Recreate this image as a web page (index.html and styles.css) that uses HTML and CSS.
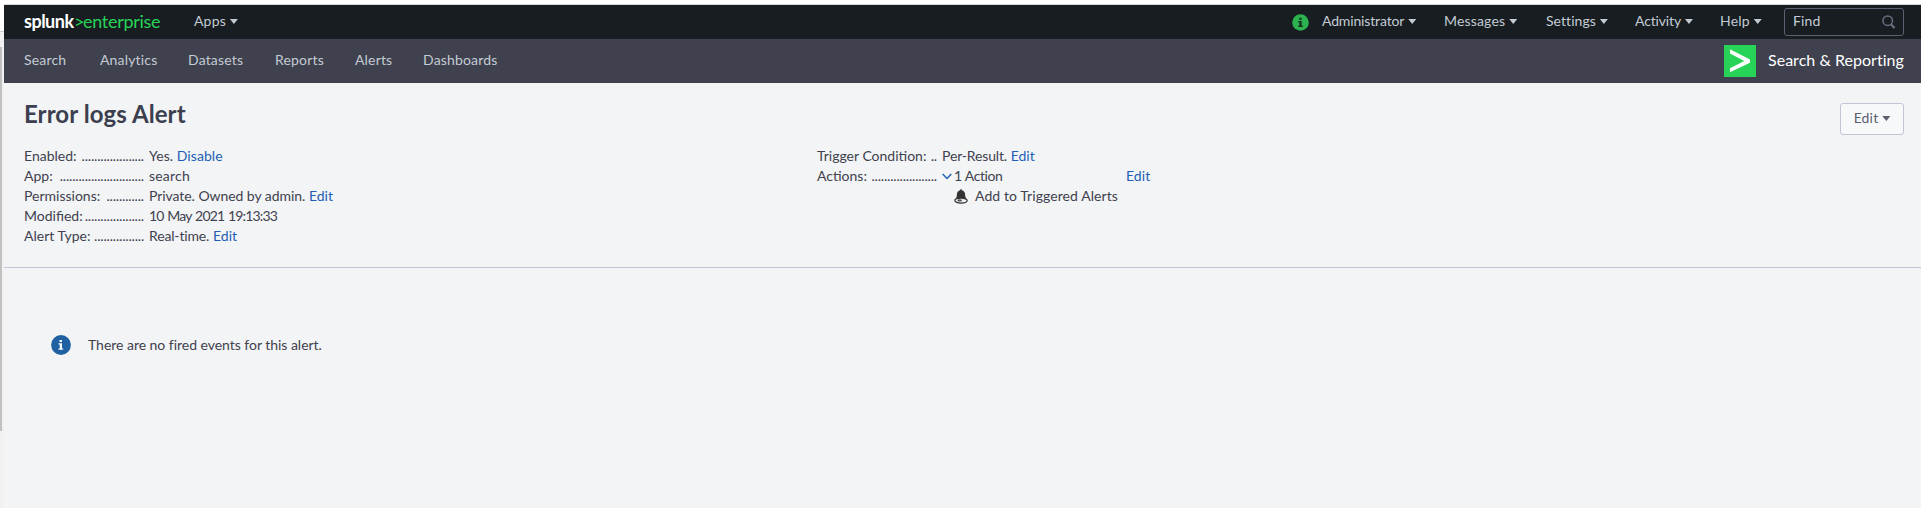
FILE: index.html
```
<!DOCTYPE html>
<html lang="en">
<head>
<meta charset="utf-8">
<title>Error logs Alert</title>
<link rel="stylesheet" href="styles.css">
</head>
<body>
<div class="frame">
<div class="gutter"><div class="gutter-top"></div><div class="gutter-track"><div class="gutter-thumb"></div></div></div>
<div class="app">
<header class="topbar">
<div class="brand"><b>splunk</b><span class="gt">&gt;</span><span class="ent">enterprise</span></div>
<div class="menu apps">Apps<i class="caret"></i></div>
<div class="spacer"></div>
<svg class="health" width="17" height="17" viewBox="0 0 17 17"><circle cx="8.5" cy="8.5" r="8.3" fill="#2cb34f"/><path d="M7.2 3.7h2.5v2H7.2zM6.1 7h3.6v4.8H11V13H6.1v-1.2h1.2V8.2H6.1z" fill="#17331f"/></svg>
<div class="menu admin">Administrator<i class="caret"></i></div>
<div class="menu messages">Messages<i class="caret"></i></div>
<div class="menu settings">Settings<i class="caret"></i></div>
<div class="menu activity">Activity<i class="caret"></i></div>
<div class="menu help">Help<i class="caret"></i></div>
<div class="find"><span>Find</span><svg width="14" height="14" viewBox="0 0 14 14" fill="none" stroke="#6b6e80"><circle cx="5.7" cy="5.7" r="4.8" stroke-width="1.5"/><path d="M9.2 9.4l3.4 3.6" stroke-width="2.2"/></svg></div>
</header>
<nav class="nav">
<a class="n1">Search</a><a class="n2">Analytics</a><a class="n3">Datasets</a><a class="n4">Reports</a><a class="n5">Alerts</a><a class="n6">Dashboards</a>
<div class="spacer"></div>
<svg width="32" height="32" viewBox="0 0 32 32"><path fill="#27d457" d="M0 0h32v32H0z"/><path fill="#fff" d="M6 4.3l20 10.1v3.3L6 27.3v-4l14.3-7.2L6 8.4z"/></svg>
<span class="appname">Search &amp; Reporting</span>
</nav>
<section class="summary">
<div class="heading"><h1>Error logs Alert</h1><button class="edit">Edit<i class="caret"></i></button></div>
<div class="columns">
<dl class="left">
<dt>Enabled: <span class="dots">....................</span></dt><dd><span class="v1">Yes.</span> <a>Disable</a></dd>
<dt>App: <span class="dots">...........................</span></dt><dd class="wide">search</dd>
<dt>Permissions: <span class="dots">............</span></dt><dd><span class="v2">Private. Owned by admin.</span> <a>Edit</a></dd>
<dt>Modified: <span class="dots">...................</span></dt><dd class="date">10 May 2021 19:13:33</dd>
<dt>Alert Type: <span class="dots">................</span></dt><dd><span class="v3">Real-time.</span> <a>Edit</a></dd>
</dl>
<dl class="right">
<dt>Trigger Condition: <span class="dots">..</span></dt><dd><span class="v4">Per-Result.</span> <a>Edit</a></dd>
<dt>Actions: <span class="dots">.....................</span></dt>
<dd class="action"><svg width="10" height="7" viewBox="0 0 10 7" fill="none" stroke="#1e63b5" stroke-width="1.5"><path d="M.7 1L5 5.5 9.3 1"/></svg><span class="count">1 Action</span><a>Edit</a></dd>
<dd class="sub"><svg width="14" height="15" viewBox="0 0 14 15"><path fill="#333" d="M6.2.3h1.5v1C10 1.8 11 3.2 11.1 5.5c.1 2.5.8 3.8 1.9 5H1c1.2-1.2 1.8-2.5 1.9-5C3 3.2 4 1.8 6.2 1.3z"/><ellipse cx="7" cy="11.6" rx="6.2" ry="2.5" fill="#f2f4f5" stroke="#333" stroke-width="1.2"/><ellipse cx="5.7" cy="11.4" rx="2.3" ry="1.2" fill="#555"/></svg><span>Add to Triggered Alerts</span></dd>
</dl>
</div>
</section>
<section class="message"><svg width="20" height="20" viewBox="0 0 20 20"><circle cx="10" cy="10" r="9.9" fill="#1e60a2"/><path fill="#f7f8fa" d="M8.5 5H11v2H8.500zM7.500 8.200H11v5.300h1.200v1.300H7.500v-1.300h1.200v-4H7.500z"/></svg><span>There are no fired events for this alert.</span></section>
</div>
</div>
</body>
</html>
```
FILE: styles.css
```
*{box-sizing:border-box}
body{margin:0;background:#fff;color:#41414f;font:14px/20px Lato,"Liberation Sans",sans-serif;letter-spacing:.17px}
a{color:#1e5fb5}
.frame{display:flex;height:508px;overflow:hidden;padding-top:4px}
.gutter{width:4px;display:flex;flex-direction:column}
.gutter-top{height:28px;border-bottom:1px solid #ccccd4}
.gutter-track{flex:1;background:#f1f1f1;padding-top:15px}
.gutter-thumb{width:2px;height:384px;background:#c1c1c1}
.app{flex:1;background:#f2f4f5;border-top:1px solid #d5d5da}
.topbar{height:34px;background:#171d21;color:#c3cbd4;display:flex;align-items:center;padding:0 17px 0 20px;white-space:nowrap}
.menu,.find span{padding-bottom:2px}
.brand{width:170px;display:flex;align-items:center;font-size:18px;color:#27d457;padding-bottom:3px}
.brand b{color:#fff;width:50px;letter-spacing:-.5px}
.gt{width:9px}
.ent{letter-spacing:-.3px}
.caret{display:inline-block;width:8px;height:5px;margin-left:4px;vertical-align:2px;background:currentColor;clip-path:polygon(0 0,100% 0,50% 100%)}
.spacer{flex:1}
.health{margin-right:13px}
.admin{width:122px;letter-spacing:-.15px}
.messages{width:102px}
.settings{width:89px;letter-spacing:.05px}
.activity{width:85px;letter-spacing:-.15px}
.help{width:64px}
.find{width:120px;height:28px;border:1px solid #5c6070;border-radius:3px;display:flex;align-items:center;justify-content:space-between;padding:0 7px 0 8px}
.nav{height:44px;background:#3f414e;color:#c3cbd4;display:flex;align-items:center;padding:0 17px 0 20px}
.nav a{color:inherit;padding-bottom:2px}
.n1{width:76px}
.n2{width:88px}
.n3{width:87px}
.n4{width:80px}
.n5{width:68px}
.n6{width:90px}
.appname{color:#fff;font-size:16px;margin-left:12px;width:136px;white-space:nowrap;letter-spacing:.03px;padding-bottom:2px}
.summary{height:185px;border-bottom:1px solid #c3c7d5;padding:0 17px 0 20px}
.heading{display:flex;justify-content:space-between;height:63px}
h1{font-size:24px;line-height:28px;font-weight:700;margin:17px 0 0;color:#3c3f50;letter-spacing:.08px}
.edit{width:64px;height:32px;margin-top:20px;border:1px solid #c3c3d5;border-radius:3px;background:#f7f8fa;color:#5c6070;font:inherit;letter-spacing:inherit;padding:0 0 2px}
.edit .caret{margin-left:4px}
.columns{display:grid;grid-template-columns:793px 1fr}
dl{display:grid;grid-template-columns:125px 1fr;grid-auto-rows:20px;margin:0;align-content:start;letter-spacing:.05px}
dt,dd{margin:0;white-space:nowrap}
dt{width:120px;display:flex;justify-content:space-between;letter-spacing:0}
.dots{letter-spacing:-.18px}
.v2{letter-spacing:-.06px}
.v3,.v4{letter-spacing:-.15px}
.wide{letter-spacing:.2px}
.date{letter-spacing:-.85px;word-spacing:1.1px}
.action{display:flex;align-items:center}
.action svg{margin-right:2px}
.count{width:172px;letter-spacing:-.45px;word-spacing:.5px}
.sub{grid-column:2;display:flex;align-items:center;padding-left:12px}
.sub span{margin-left:7px;letter-spacing:.08px}
.message{display:flex;align-items:center;padding:67px 0 0 47px;letter-spacing:-.03px}
.message span{margin-left:17px}
```
